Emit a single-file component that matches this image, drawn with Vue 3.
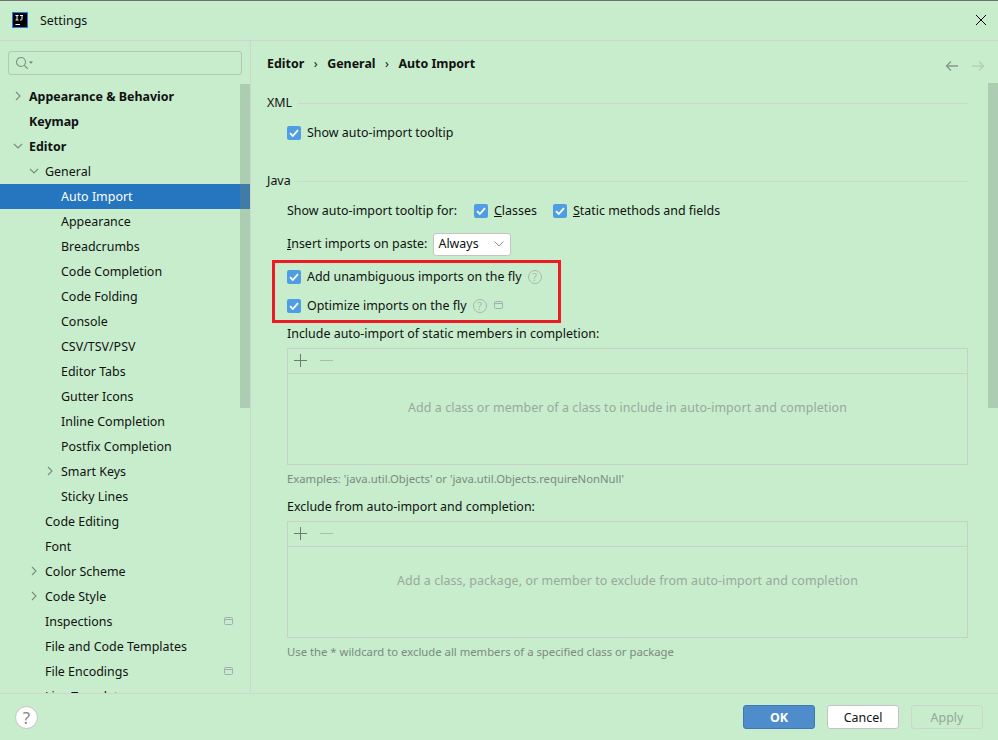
<script setup>
const tree = [
  { t: 'Appearance & Behavior', l: 0, b: true, a: 'r' },
  { t: 'Keymap', l: 0, b: true },
  { t: 'Editor', l: 0, b: true, a: 'd' },
  { t: 'General', l: 1, a: 'd' },
  { t: 'Auto Import', l: 2, sel: true },
  { t: 'Appearance', l: 2 },
  { t: 'Breadcrumbs', l: 2 },
  { t: 'Code Completion', l: 2 },
  { t: 'Code Folding', l: 2 },
  { t: 'Console', l: 2 },
  { t: 'CSV/TSV/PSV', l: 2 },
  { t: 'Editor Tabs', l: 2 },
  { t: 'Gutter Icons', l: 2 },
  { t: 'Inline Completion', l: 2 },
  { t: 'Postfix Completion', l: 2 },
  { t: 'Smart Keys', l: 2, a: 'r' },
  { t: 'Sticky Lines', l: 2 },
  { t: 'Code Editing', l: 1 },
  { t: 'Font', l: 1 },
  { t: 'Color Scheme', l: 1, a: 'r' },
  { t: 'Code Style', l: 1, a: 'r' },
  { t: 'Inspections', l: 1, w: true },
  { t: 'File and Code Templates', l: 1 },
  { t: 'File Encodings', l: 1, w: true },
  { t: 'Live Templates', l: 1 },
]
</script>

<template>
  <div class="win">
    <header class="title">
      <svg class="logo" width="16" height="16" viewBox="0 0 16 16">
        <rect x="0.5" y="0.5" width="15" height="15" fill="#000" stroke="#1e7fe0" />
        <path d="M3.5 3.5h3M5 3.5v4.5M3.5 8h3M8 3.5h3M10 3.5v3.7q0 .8-1 .8H8M3.5 12.5h4.5" stroke="#fff" stroke-width="1" fill="none" />
      </svg>
      <span class="title-text">Settings</span>
      <svg class="close" width="12" height="12" viewBox="0 0 12 12">
        <path d="M1 1l10 10M11 1L1 11" stroke="#000" stroke-width="1" />
      </svg>
    </header>

    <div class="main">
      <aside class="side">
        <div class="search">
          <svg width="20" height="14" viewBox="0 0 20 14">
            <circle cx="6" cy="6" r="4.5" fill="none" stroke="#7f8b82" stroke-width="1.1" />
            <path d="M9.3 9.3l3.5 3.5" stroke="#7f8b82" stroke-width="1.2" />
            <path d="M14 5.5h4l-2 2.2z" fill="#6f7b72" />
          </svg>
        </div>
        <div class="tree-wrap">
          <ul class="tree">
            <li v-for="n in tree" :key="n.t" class="row" :class="[`lv${n.l}`, { sel: n.sel, bold: n.b }]">
              <svg v-if="n.a" class="arrow" width="10" height="10" viewBox="0 0 10 10">
                <path v-if="n.a === 'r'" d="M3 1l4 4-4 4" fill="none" stroke="#7d8a80" stroke-width="1.1" />
                <path v-else d="M1 3l4 4 4-4" fill="none" stroke="#7d8a80" stroke-width="1.1" />
              </svg>
              <span>{{ n.t }}</span>
              <svg v-if="n.w" class="win-ic" width="9" height="8" viewBox="0 0 9 8">
                <rect x=".5" y=".5" width="8" height="7" rx="1" fill="none" stroke="#a3aeb3" />
                <path d="M.5 2.5h8" stroke="#a3aeb3" />
              </svg>
            </li>
          </ul>
          <div class="thumb left"></div>
        </div>
      </aside>

      <section class="content">
        <div class="crumbs">
          <b>Editor</b><i>›</i><b>General</b><i>›</i><b>Auto Import</b>
          <span class="nav">
            <svg width="14" height="12" viewBox="0 0 14 12"><path d="M13 6H2M6 1.5L1.5 6 6 10.5" fill="none" stroke="#8b988f" stroke-width="1.4" /></svg>
            <svg width="14" height="12" viewBox="0 0 14 12"><path d="M1 6h11M8 1.5L12.5 6 8 10.5" fill="none" stroke="#b9ceba" stroke-width="1.4" /></svg>
          </span>
        </div>

        <div class="group-title first"><span>XML</span><hr /></div>
        <label class="line ind xml-line"><span class="cb"><svg width="14" height="14" viewBox="0 0 14 14"><path d="M3 7.2l2.8 2.8L11 4.2" fill="none" stroke="#fff" stroke-width="1.8" /></svg></span>Show auto-import tooltip</label>

        <div class="group-title java"><span>Java</span><hr /></div>
        <div class="line ind tip-line">
          Show auto-import tooltip for:
          <span class="cb m1"><svg width="14" height="14" viewBox="0 0 14 14"><path d="M3 7.2l2.8 2.8L11 4.2" fill="none" stroke="#fff" stroke-width="1.8" /></svg></span><span><u>C</u>lasses</span>
          <span class="cb m2"><svg width="14" height="14" viewBox="0 0 14 14"><path d="M3 7.2l2.8 2.8L11 4.2" fill="none" stroke="#fff" stroke-width="1.8" /></svg></span><span><u>S</u>tatic methods and fields</span>
        </div>
        <div class="line ind paste-line">
          <span><u>I</u>nsert imports on paste:</span>
          <span class="combo">Always
            <svg width="10" height="6" viewBox="0 0 10 6"><path d="M.5.5L5 5 9.5.5" fill="none" stroke="#8d8d8d" stroke-width="1" /></svg>
          </span>
        </div>

        <div class="line ind fly fly1">
          <span class="cb"><svg width="14" height="14" viewBox="0 0 14 14"><path d="M3 7.2l2.8 2.8L11 4.2" fill="none" stroke="#fff" stroke-width="1.8" /></svg></span>Add unambiguous imports on the fly
          <span class="help">?</span>
        </div>
        <div class="line ind fly fly2">
          <span class="cb"><svg width="14" height="14" viewBox="0 0 14 14"><path d="M3 7.2l2.8 2.8L11 4.2" fill="none" stroke="#fff" stroke-width="1.8" /></svg></span>Optimize imports on the fly
          <span class="help">?</span>
          <svg class="win-small" width="9" height="8" viewBox="0 0 9 8"><rect x=".5" y=".5" width="8" height="7" rx="1" fill="none" stroke="#a3aeb3" /><path d="M.5 2.5h8" stroke="#a3aeb3" /></svg>
        </div>
        <div class="redbox"></div>

        <div class="line ind sub">Include auto-import of static members in completion:</div>
        <div class="panel p1">
          <div class="tools">
            <svg width="13" height="13" viewBox="0 0 13 13"><path d="M6.5 0v13M0 6.5h13" stroke="#6c7a70" stroke-width="1" /></svg>
            <svg width="13" height="13" viewBox="0 0 13 13"><path d="M0 6.5h13" stroke="#aebdb0" stroke-width="1" /></svg>
          </div>
          <div class="empty">Add a class or member of a class to include in auto-import and completion</div>
        </div>
        <div class="hint h1">Examples: 'java.util.Objects' or 'java.util.Objects.requireNonNull'</div>

        <div class="line ind sub s2">Exclude from auto-import and completion:</div>
        <div class="panel p2">
          <div class="tools">
            <svg width="13" height="13" viewBox="0 0 13 13"><path d="M6.5 0v13M0 6.5h13" stroke="#6c7a70" stroke-width="1" /></svg>
            <svg width="13" height="13" viewBox="0 0 13 13"><path d="M0 6.5h13" stroke="#aebdb0" stroke-width="1" /></svg>
          </div>
          <div class="empty">Add a class, package, or member to exclude from auto-import and completion</div>
        </div>
        <div class="hint h2">Use the * wildcard to exclude all members of a specified class or package</div>
        <div class="thumb right"></div>
      </section>
    </div>

    <footer class="foot">
      <span class="qbtn">?</span>
      <span class="btn ok">OK</span>
      <span class="btn cancel">Cancel</span>
      <span class="btn apply">Apply</span>
    </footer>
  </div>
</template>

<style>
html, body { margin: 0; padding: 0; }
</style>

<style scoped>
.win {
  width: 998px; height: 740px; box-sizing: border-box; overflow: hidden;
  background: #c7edcc; border-top: 1px solid #707070;
  display: flex; flex-direction: column;
  font: 12.45px/18px "Noto Sans", sans-serif; color: #111;
}
.title { flex: none; display: flex; align-items: center; padding: 0 11px 2px 12px; box-sizing: content-box; height: 37px; border-bottom: 1px solid #d0d5d1; }
.logo { flex: none; }
.title-text { margin-left: 12px; margin-top: 2px; }
.close { margin-left: auto; }
.main { flex: 1; display: flex; min-height: 0; }
.side { width: 250px; flex: none; border-right: 1px solid #d0d5d1; display: flex; flex-direction: column; min-height: 0; }
.search { margin: 10px 8px 0; width: 226px; height: 22px; border: 1px solid #b4c5b6; border-radius: 3px; display: flex; align-items: center; padding-left: 6px; box-sizing: content-box; }
.tree-wrap { position: relative; flex: 1; min-height: 0; overflow: hidden; margin-top: 9px; }
.tree { list-style: none; margin: 0; padding: 0; }
.row { height: 25px; display: flex; align-items: center; position: relative; white-space: nowrap; }
.row.bold { font-weight: 700; }
.lv0 { padding-left: 29px; }
.lv1 { padding-left: 45px; }
.lv2 { padding-left: 61px; }
.row.sel { background: #2675bf; color: #fff; }
.arrow { position: absolute; top: 7px; }
.lv0 .arrow { left: 13px; }
.lv1 .arrow { left: 29px; }
.lv2 .arrow { left: 45px; }
.win-ic { position: absolute; left: 224px; top: 8px; }
.thumb { position: absolute; width: 10px; background: rgba(120,140,125,.33); }
.thumb.left { right: 0; top: 0; height: 324px; }
.thumb.right { right: 0; top: 42px; height: 325px; }

.content { flex: 1; position: relative; min-width: 0; padding-left: 16px; overflow: hidden; }
.crumbs { height: 20px; margin-top: 13px; display: flex; align-items: center; }
.crumbs b { font-weight: 700; }
.crumbs i { font-style: normal; margin: 0 9.5px; font-weight: 400; }
.nav { margin-left: auto; margin-right: 13px; display: flex; gap: 12px; margin-top: 3px; }
.group-title { display: flex; align-items: center; margin-right: 30px; height: 18px; }
.group-title hr { flex: 1; border: 0; border-top: 1px solid #d0d5d1; margin: 0 0 0 6px; }
.group-title.first { margin-top: 20px; }
.group-title.java { margin-top: 30px; }
.line { display: flex; align-items: center; height: 18px; }
.ind { margin-left: 20px; }
.xml-line { margin-top: 12px; }
.tip-line { margin-top: 12px; }
.paste-line { margin-top: 13px; height: 22px; }
.cb { width: 14px; height: 14px; background: #4f9ee3; border-radius: 2px; display: inline-flex; margin-right: 6px; flex: none; }
.m1 { margin-left: 17px; }
.m2 { margin-left: 16px; }
.combo { margin-left: 6px; width: 78px; box-sizing: border-box; height: 23px; background: #fff; border: 1px solid #c4c4c4; border-radius: 3px; display: flex; align-items: center; justify-content: space-between; padding: 0 6px 0 4px; }
.fly1 { margin-top: 13px; }
.fly2 { margin-top: 11px; }
.help { width: 12px; height: 12px; border: 1px solid #a9b8ad; border-radius: 50%; color: #a9b8ad; font-size: 11px; line-height: 12px; text-align: center; margin-left: 6px; margin-top: -1px; }
.win-small { margin-left: 7px; margin-top: -3px; }
.redbox { position: absolute; left: 21px; top: 219px; width: 289px; height: 63px; border: 3px solid #ed1c24; box-sizing: border-box; pointer-events: none; }
.sub { margin-top: 10px; }
.s2 { margin-top: 11px; }
.panel { margin: 5px 30px 0 20px; border: 1px solid #c9d0ca; display: flex; flex-direction: column; }
.p1 { height: 115px; }
.p2 { height: 115px; }
.tools { height: 25px; flex: none; border-bottom: 1px solid #c9d0ca; display: flex; align-items: center; padding: 0 0 1px 6px; box-sizing: border-box; gap: 13px; }
.empty { flex: 1; display: flex; align-items: center; justify-content: center; color: #9aa89d; padding-bottom: 22px; letter-spacing: .07px; }
.hint { margin-left: 20px; font-size: 11.3px; color: #7c8a80; height: 17px; line-height: 17px; margin-top: 5px; }
.foot { height: 46px; flex: none; border-top: 1px solid #d0d5d1; display: flex; align-items: center; padding: 0 15px; }
.qbtn { width: 21px; height: 21px; border-radius: 50%; background: #fff; border: 1px solid #c4c4c4; color: #888; text-align: center; line-height: 21px; font-size: 17px; margin-right: auto; }
.btn { width: 72px; height: 24px; box-sizing: border-box; border-radius: 3px; display: flex; align-items: center; justify-content: center; margin-left: 12px; padding-top: 1px; }
.ok { background: #4f8ccb; border: 1px solid #3f78b8; color: #fff; font-weight: 700; }
.cancel { background: #fff; border: 1px solid #c4c4c4; }
.apply { border: 1px solid #cdd4ce; color: #98a49b; }
</style>
